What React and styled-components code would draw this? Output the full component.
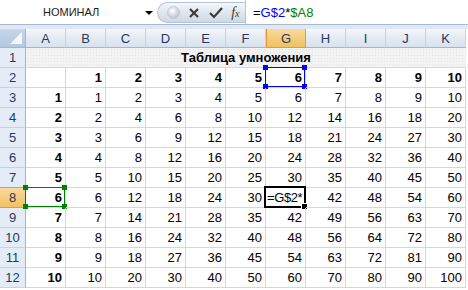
import React from 'react';
import styled, { createGlobalStyle, css } from 'styled-components';

const GlobalStyle = createGlobalStyle`
    html, body {
        margin: 0;
        padding: 0;
        background: #ffffff;
    }
    body {
        font-family: "Liberation Sans", Arial, sans-serif;
    }
`;

const COLS = ['A', 'B', 'C', 'D', 'E', 'F', 'G', 'H', 'I', 'J', 'K'];

const RangeBox = ({ color }) => (
    <RangeFrame color={color}>
        <Handle color={color} x="left" y="top" />
        <Handle color={color} x="right" y="top" />
        <Handle color={color} x="left" y="bottom" />
        <Handle color={color} x="right" y="bottom" />
    </RangeFrame>
);

export default function App() {
    const rows = [];
    for (let r = 3; r <= 12; r++) {
        const n = r - 2;
        const cells = [{ value: n, bold: true }];
        for (let c = 1; c <= 10; c++) {
            cells.push({ value: n * c });
        }
        rows.push({ num: r, cells });
    }

    return (
        <>
            <GlobalStyle />
            <Window>
                <FormulaBar>
                    <NameBox>
                        <span>НОМИНАЛ</span>
                        <Arrow />
                    </NameBox>
                    <ButtonPill>
                        <CircleIcon />
                        <svg width="14" height="14" viewBox="0 0 14 14">
                            <path d="M3 3 L11 11 M11 3 L3 11" stroke="#3c3c3c" strokeWidth="2.2" />
                        </svg>
                        <svg width="16" height="14" viewBox="0 0 16 14">
                            <path d="M2 7 L6 11 L14 2" stroke="#3c3c3c" strokeWidth="2.2" fill="none" />
                        </svg>
                        <Fx>
                            f<sub>x</sub>
                        </Fx>
                    </ButtonPill>
                    <FormulaInput>
                        =<Ref color="#0000ff">G$2</Ref>*<Ref color="#008000">$A8</Ref>
                    </FormulaInput>
                </FormulaBar>
                <Strip />
                <Grid>
                    <Corner>
                        <svg width="12" height="12" viewBox="0 0 12 12">
                            <path d="M12 0 L12 12 L0 12 Z" fill="#ffffff" opacity="0.85" />
                        </svg>
                    </Corner>
                    {COLS.map((c) => (
                        <ColHeader key={c} active={c === 'G'}>
                            {c}
                        </ColHeader>
                    ))}
                    <Filler />

                    <RowHeader>1</RowHeader>
                    <TitleCell>Таблица умножения</TitleCell>
                    <Filler />

                    <RowHeader>2</RowHeader>
                    <Cell />
                    {Array.from({ length: 10 }, (_, i) => (
                        <Cell key={i} bold>
                            {i + 1}
                            {i === 5 && <RangeBox color="#0000ff" />}
                        </Cell>
                    ))}
                    <Filler />

                    {rows.map((row) => (
                        <React.Fragment key={row.num}>
                            <RowHeader active={row.num === 8}>{row.num}</RowHeader>
                            {row.cells.map((cell, i) => {
                                if (row.num === 8 && i === 6) {
                                    return (
                                        <Cell key={i} left>
                                            =G$2*
                                            <ActiveBox />
                                        </Cell>
                                    );
                                }
                                return (
                                    <Cell key={i} bold={cell.bold}>
                                        {cell.value}
                                        {row.num === 8 && i === 0 && <RangeBox color="#008000" />}
                                    </Cell>
                                );
                            })}
                            <Filler />
                        </React.Fragment>
                    ))}
                </Grid>
            </Window>
        </>
    );
}

const Window = styled.div`
    width: 468px;
    height: 290px;
    overflow: hidden;
    display: flex;
    flex-direction: column;
    background: #ffffff;
`;

const FormulaBar = styled.div`
    height: 25px;
    display: flex;
    align-items: stretch;
    background: #ffffff;
    border-bottom: 1px solid #a5b8d0;
    box-sizing: border-box;
`;

const NameBox = styled.div`
    width: 157px;
    display: flex;
    align-items: center;
    justify-content: space-between;
    padding: 0 4px 0 43px;
    box-sizing: border-box;
    font-size: 11px;
    color: #1a1a1a;
`;

const Arrow = styled.span`
    width: 0;
    height: 0;
    border-left: 4px solid transparent;
    border-right: 4px solid transparent;
    border-top: 4px solid #000000;
    margin-top: 1px;
`;

const ButtonPill = styled.div`
    width: 88px;
    margin: 2px 0 1px;
    display: flex;
    align-items: center;
    justify-content: space-around;
    padding: 0 2px 0 6px;
    box-sizing: border-box;
    border-radius: 11px 0 0 11px;
    background: linear-gradient(#f4f7fb, #dfe6ef 50%, #cfd9e5);
    border: 1px solid #b4c3d6;
    border-right: none;
`;

const CircleIcon = styled.span`
    width: 11px;
    height: 11px;
    border-radius: 50%;
    background: radial-gradient(circle at 40% 35%, #ffffff, #c9d2dd 60%, #aab6c6);
    border: 1px solid #c0cad7;
`;

const Fx = styled.span`
    font-family: "Liberation Serif", serif;
    font-style: italic;
    font-size: 14px;
    color: #3c3c3c;
    sub {
        font-size: 10px;
        vertical-align: baseline;
    }
`;

const FormulaInput = styled.div`
    flex: 1;
    display: flex;
    align-items: center;
    padding-left: 7px;
    border-left: 1px solid #b4c3d6;
    font-size: 13px;
    color: #000000;
`;

const Ref = styled.span`
    color: ${(p) => p.color};
`;

const Strip = styled.div`
    height: 4px;
    background: #dfe8f3;
`;

const Grid = styled.div`
    display: grid;
    grid-template-columns: 26px repeat(11, 40px) 2px;
    grid-template-rows: 19px repeat(12, 20px);
    font-size: 13px;
`;

const headerBase = css`
    display: flex;
    align-items: center;
    justify-content: center;
    box-sizing: border-box;
    color: #27395a;
    font-size: 13px;
`;

const Corner = styled.div`
    ${headerBase};
    justify-content: flex-end;
    align-items: flex-end;
    padding: 0 3px 3px 0;
    background: linear-gradient(#c6d6ea, #b5c8e2);
    border-right: 1px solid #9eb6ce;
    border-bottom: 1px solid #9eb6ce;
`;

const ColHeader = styled.div`
    ${headerBase};
    background: ${(p) =>
        p.active
            ? 'linear-gradient(#f9d99f, #f1c15f)'
            : 'linear-gradient(#f4f7fb, #e4eaf3 50%, #d9e2ee)'};
    border-right: 1px solid ${(p) => (p.active ? '#f29536' : '#c5d2e2')};
    border-bottom: 1px solid ${(p) => (p.active ? '#f29536' : '#9eb6ce')};
    ${(p) => p.active && 'border-left: 1px solid #f29536;'}
`;

const RowHeader = styled.div`
    ${headerBase};
    background: ${(p) => (p.active ? 'linear-gradient(#f9d99f, #f1c15f)' : '#e4ecf7')};
    border-right: 1px solid ${(p) => (p.active ? '#f29536' : '#9eb6ce')};
    border-bottom: 1px solid ${(p) => (p.active ? '#f29536' : '#c5d2e2')};
    ${(p) => p.active && 'border-top: 1px solid #f29536; margin-top: -1px;'}
`;

const Filler = styled.div`
    background: #ffffff;
`;

const TitleCell = styled.div`
    grid-column: 2 / span 11;
    display: flex;
    align-items: center;
    justify-content: center;
    font-weight: bold;
    color: #000000;
    background-color: #f3f3f3;
    background-image: radial-gradient(#e4e4e4 0.6px, transparent 0.8px);
    background-size: 3px 3px;
    border-bottom: 1px solid #d0d7e5;
    box-sizing: border-box;
`;

const Cell = styled.div`
    position: relative;
    display: flex;
    align-items: center;
    justify-content: ${(p) => (p.left ? 'flex-start' : 'flex-end')};
    padding: 0 ${(p) => (p.left ? '0 0 1px' : '3px')};
    box-sizing: border-box;
    border-right: 1px solid #d0d7e5;
    border-bottom: 1px solid #d0d7e5;
    font-weight: ${(p) => (p.bold ? 'bold' : 'normal')};
    letter-spacing: ${(p) => (p.left ? '-0.4px' : 'normal')};
    color: #000000;
    white-space: nowrap;
`;

const RangeFrame = styled.span`
    position: absolute;
    left: -1px;
    top: -1px;
    right: 0;
    bottom: 0;
    border: 1px solid ${(p) => p.color};
    pointer-events: none;
`;

const Handle = styled.span`
    position: absolute;
    ${(p) => p.x}: -3px;
    ${(p) => p.y}: -3px;
    width: 5px;
    height: 5px;
    background: ${(p) => p.color};
`;

const ActiveBox = styled.span`
    position: absolute;
    left: -2px;
    top: -2px;
    right: -1px;
    bottom: -1px;
    border: 2px solid #000000;
    pointer-events: none;
    &::after {
        content: '';
        position: absolute;
        right: -4px;
        bottom: -4px;
        width: 5px;
        height: 5px;
        background: #000000;
        border: 1px solid #ffffff;
    }
`;
